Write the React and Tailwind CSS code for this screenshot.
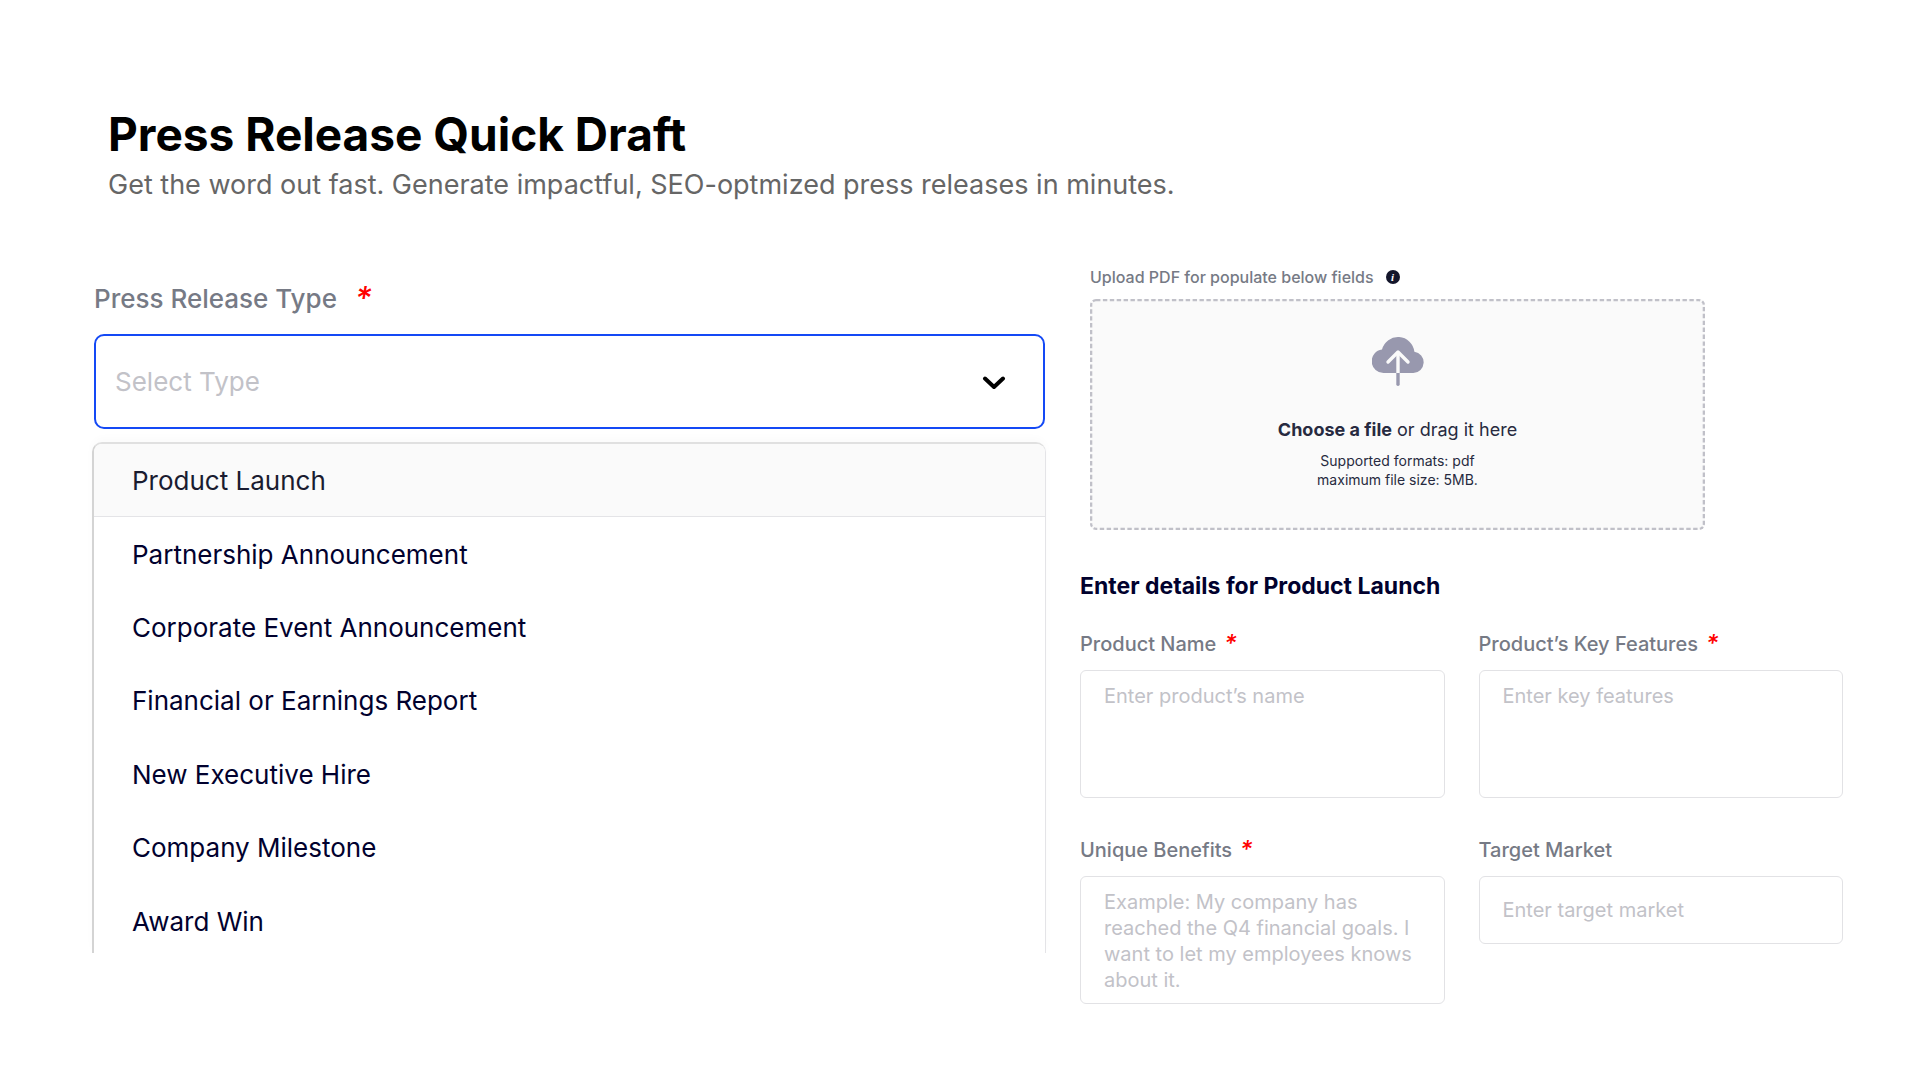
const releaseTypes = [
  "Product Launch",
  "Partnership Announcement",
  "Corporate Event Announcement",
  "Financial or Earnings Report",
  "New Executive Hire",
  "Company Milestone",
  "Award Win",
];

const fieldClass =
  "block w-full resize-none rounded-md border border-[#e2e2e5] bg-white px-[23px] text-xl leading-[26px] text-[#01012e] placeholder:text-[#c2c2c8] placeholder:opacity-100 outline-none";

function Required({ className }) {
  return <span aria-hidden="true" className={`italic text-[#ff0000] ${className}`}>*</span>;
}

function Field({ id, label, required, placeholder, single }) {
  return (
    <div>
      <label htmlFor={id} className="mb-3 flex h-7 gap-2 text-xl leading-7 font-medium text-[#767a85]">
        {label}
        {required && <Required className="text-2xl leading-7" />}
      </label>
      {single ? (
        <input id={id} type="text" placeholder={placeholder} className={`${fieldClass} h-[68px]`} />
      ) : (
        <textarea id={id} placeholder={placeholder} className={`${fieldClass} h-32 overflow-hidden py-3`} />
      )}
    </div>
  );
}

function TypePicker() {
  return (
    <section>
      <label htmlFor="release-type" className="mx-0.5 flex gap-[18px] text-[26px] leading-8 font-medium text-[#767a85]">
        Press Release Type
        <Required className="text-[32px] leading-8" />
      </label>
      <div className="relative mr-px ml-0.5 mt-[19px]">
        <select
          id="release-type"
          defaultValue=""
          className="block h-[95px] w-full appearance-none rounded-[10px] border-2 border-[#1449f5] bg-white px-[19px] text-[26px] text-[#c2c2c8] outline-none"
        >
          <option value="" disabled>Select Type</option>
          {releaseTypes.map((type) => (
            <option key={type}>{type}</option>
          ))}
        </select>
        <svg viewBox="0 0 24 14" className="pointer-events-none absolute top-[42px] right-[39px] h-3.5 w-6" fill="none" stroke="black" strokeWidth="4" strokeLinecap="round" strokeLinejoin="round">
          <path d="M3 2.5 12 11 21 2.5" />
        </svg>
      </div>
      <div className="mt-[13px] h-[511px] overflow-hidden rounded-t-[10px] border-t-2 border-r border-l-2 border-t-[#e0e0e0] border-r-[#e4e4e7] border-l-[#d4d4d4] shadow-[0_-4px_8px_rgba(0,0,0,0.02)]">
        <ul role="listbox" aria-label="Press Release Type" className="grid h-[514px] auto-rows-fr text-[26px] text-[#01012e]">
          {releaseTypes.map((type) => (
            <li
              key={type}
              role="option"
              aria-selected={type === "Product Launch"}
              className="flex items-center px-[38px] aria-selected:border-b aria-selected:border-[#e4e4e7] aria-selected:bg-[#fafafa] aria-selected:text-[#1a1c30]"
            >
              {type}
            </li>
          ))}
        </ul>
      </div>
    </section>
  );
}

function UploadBox() {
  return (
    <div className="mr-[138px] ml-2.5">
      <div className="flex items-center gap-3 text-base leading-6 font-medium text-[#767a85]">
        Upload PDF for populate below fields
        <button type="button" aria-label="About PDF upload" className="flex size-3.5 items-center justify-center rounded-full bg-[#14162b] font-['Liberation_Serif',serif] text-[11px] leading-none font-bold text-white italic">
          i
        </button>
      </div>
      <label className="relative mt-2.5 flex h-[231px] cursor-pointer flex-col items-center rounded-md bg-[#fafafa] pt-[38px] text-[#272a40]">
        {/* short, tight dashes that border-dashed can't give */}
        <svg className="pointer-events-none absolute inset-0 h-full w-full overflow-hidden rounded-md" aria-hidden="true">
          <rect x="0" y="0" width="100%" height="100%" rx="6" fill="none" stroke="#c0c0c8" strokeWidth="4.6" strokeDasharray="4.4 2.5" />
        </svg>
        <input type="file" accept="application/pdf" className="sr-only" />
        <svg viewBox="0 0 52 49" className="h-[49px] w-[52px]" fill="none" strokeLinecap="round" strokeLinejoin="round">
          <path d="M11.800 36A11.800 11.800 0 0 1 10 12.500A16.500 16.500 0 0 1 42.400 14.800A10.650 10.650 0 0 1 41.400 36Z" fill="#9898ae" />
          <path d="M26 36V47.200" stroke="#9898ae" strokeWidth="3.400" />
          <path d="M26 36V15" stroke="#fafafa" strokeWidth="3.400" strokeLinecap="butt" />
          <path d="M16 25 26 15 36 25" stroke="#fafafa" strokeWidth="3.400" />
        </svg>
        <span className="mt-8 text-lg leading-6"><b>Choose a file</b> or drag it here</span>
        <span className="mt-[9px] text-center text-sm leading-[19px]">Supported formats: pdf<br />maximum file size: 5MB.</span>
      </label>
    </div>
  );
}

export default function App() {
  return (
    <main className="min-h-screen bg-white pt-[107px] pr-[77px] pb-10 pl-[92px] font-[Inter,sans-serif]">
      <header className="pl-4">
        <h1 className="text-[46px] leading-[54px] font-bold text-black">Press Release Quick Draft</h1>
        <p className="mt-1.5 text-[27px] leading-9 text-[#666666]">
          Get the word out fast. Generate impactful, SEO-optmized press releases in minutes.
        </p>
      </header>
      <div className="mt-[62px] grid grid-cols-[954fr_763fr] items-start gap-[34px]">
        <div className="pt-[18px]">
          <TypePicker />
        </div>
        <section>
          <UploadBox />
          <h2 className="mt-10 text-[23px] leading-8 font-bold text-[#01012e]">Enter details for Product Launch</h2>
          <div className="mt-7 grid grid-cols-2 gap-x-[34px] gap-y-[38px]">
            <Field id="name" label="Product Name" required placeholder="Enter product’s name" />
            <Field id="features" label="Product’s Key Features" required placeholder="Enter key features" />
            <Field id="benefits" label="Unique Benefits" required placeholder="Example: My company has reached the Q4 financial goals. I want to let my employees knows about it." />
            <Field id="market" label="Target Market" placeholder="Enter target market" single />
          </div>
        </section>
      </div>
    </main>
  );
}
